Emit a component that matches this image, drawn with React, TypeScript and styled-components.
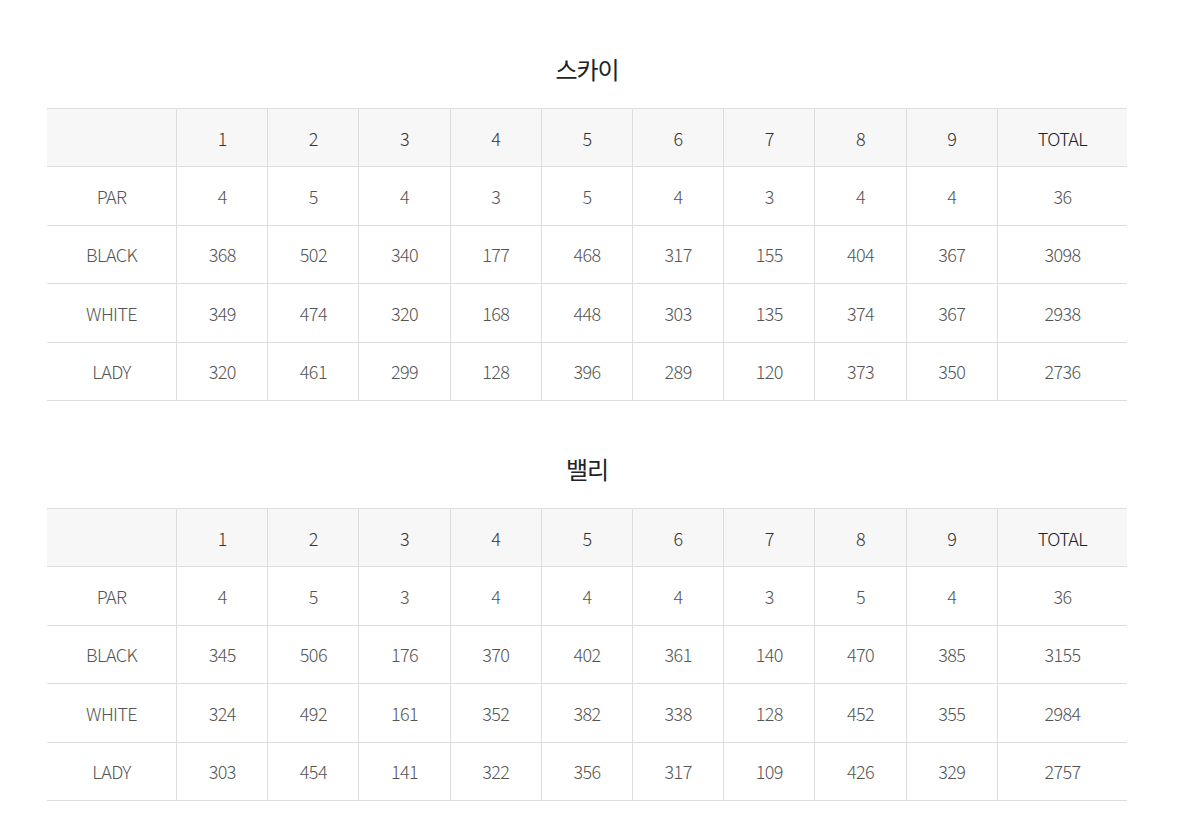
import styled, { createGlobalStyle } from "styled-components";

interface Course {
  name: string;
  par: number[];
  black: number[];
  white: number[];
  lady: number[];
}

const courses: Course[] = [
  {
    name: "스카이",
    par: [4, 5, 4, 3, 5, 4, 3, 4, 4],
    black: [368, 502, 340, 177, 468, 317, 155, 404, 367],
    white: [349, 474, 320, 168, 448, 303, 135, 374, 367],
    lady: [320, 461, 299, 128, 396, 289, 120, 373, 350],
  },
  {
    name: "밸리",
    par: [4, 5, 3, 4, 4, 4, 3, 5, 4],
    black: [345, 506, 176, 370, 402, 361, 140, 470, 385],
    white: [324, 492, 161, 352, 382, 338, 128, 452, 355],
    lady: [303, 454, 141, 322, 356, 317, 109, 426, 329],
  },
];

const sum = (arr: number[]) => arr.reduce((a, b) => a + b, 0);

function App() {
  return (
    <>
      <GlobalStyle />
      <Page>
        {courses.map((c) => (
          <Section key={c.name}>
            <Title>{c.name}</Title>
            <Table>
              <colgroup>
                <col style={{ width: "12%" }} />
                {c.par.map((_, i) => (
                  <col key={i} />
                ))}
                <col style={{ width: "12%" }} />
              </colgroup>
              <thead>
                <tr>
                  <Th />
                  {c.par.map((_, i) => (
                    <Th key={i}>{i + 1}</Th>
                  ))}
                  <Th $strong>TOTAL</Th>
                </tr>
              </thead>
              <tbody>
                {[
                  ["PAR", c.par],
                  ["BLACK", c.black],
                  ["WHITE", c.white],
                  ["LADY", c.lady],
                ].map(([label, vals]) => (
                  <tr key={label as string}>
                    <Td>{label as string}</Td>
                    {(vals as number[]).map((v, i) => (
                      <Td key={i}>{v}</Td>
                    ))}
                    <Td>{sum(vals as number[])}</Td>
                  </tr>
                ))}
              </tbody>
            </Table>
          </Section>
        ))}
      </Page>
    </>
  );
}

const GlobalStyle = createGlobalStyle`
  body {
    margin: 0;
    background: #fff;
    font-family: "Noto Sans CJK KR", "Noto Sans", sans-serif;
  }
`;

const Page = styled.main`
  width: 1080px;
  margin-left: 47px;
  padding-top: 51px;
  display: flex;
  flex-direction: column;
  gap: 50px;
`;

const Section = styled.section`
  display: flex;
  flex-direction: column;
`;

const Title = styled.h3`
  margin: 0 0 21px;
  text-align: center;
  font-size: 24px;
  line-height: 36px;
  font-weight: 400;
  letter-spacing: -1px;
  color: #222;
`;

const Table = styled.table`
  width: 100%;
  border-collapse: collapse;
  table-layout: fixed;
  border-top: 1px solid #ddd;
`;

const Th = styled.th<{ $strong?: boolean }>`
  height: 57.4px;
  padding: 0;
  background: #f7f7f7;
  border-bottom: 1px solid #ddd;
  border-left: 1px solid #ddd;
  font-size: 18px;
  font-weight: 300;
  letter-spacing: -0.6px;
  color: ${(p) => (p.$strong ? "#222" : "#333")};
  text-align: center;

  &:first-child {
    border-left: none;
  }
`;

const Td = styled.td`
  height: 57.4px;
  padding: 0;
  border-bottom: 1px solid #ddd;
  border-left: 1px solid #ddd;
  font-size: 18px;
  font-weight: 300;
  letter-spacing: -0.6px;
  color: #555;
  text-align: center;

  &:first-child {
    border-left: none;
  }
`;

export default App;
